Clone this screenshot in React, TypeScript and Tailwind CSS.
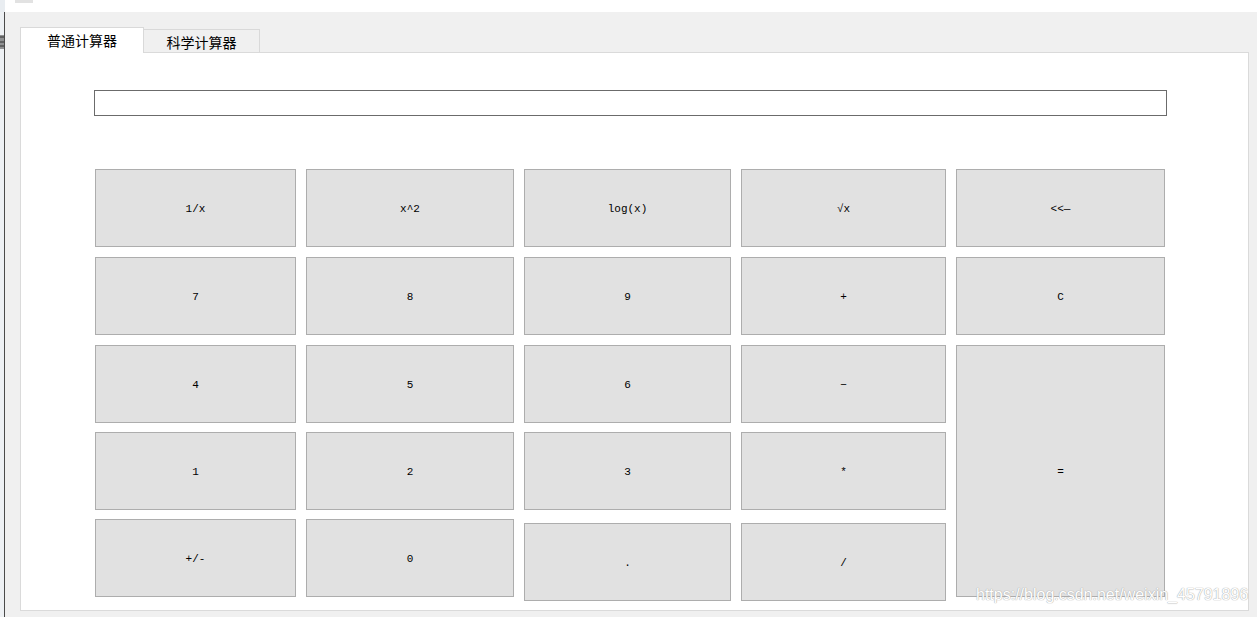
import React from "react";

const mono = { fontFamily: '"Liberation Mono", "DejaVu Sans Mono", monospace' };
const cjk = { fontFamily: '"Noto Sans CJK SC", "Noto Sans", sans-serif' };

type Key = { label: string; cls?: string };

const keys: Key[] = [
  { label: "1/x" },
  { label: "x^2" },
  { label: "log(x)" },
  { label: "√x" },
  { label: "<<—" },
  { label: "7" },
  { label: "8" },
  { label: "9" },
  { label: "+" },
  { label: "C" },
  { label: "4" },
  { label: "5" },
  { label: "6" },
  { label: "−" },
  { label: "=", cls: "row-span-3" },
  { label: "1" },
  { label: "2" },
  { label: "3" },
  { label: "*" },
  { label: "+/-" },
  { label: "0" },
  { label: ".", cls: "mt-[4px]" },
  { label: "/", cls: "mt-[4px]" },
];

const App = () => {
  return (
    <div className="w-[1257px] h-[617px] bg-white flex flex-col overflow-hidden">
      {/* strip of the window behind */}
      <div className="h-[12px] shrink-0 flex">
        <div className="w-[5px] bg-[#e9edf1]" />
        <div className="ml-[10px] w-[18px] h-[3px] bg-[#e2e2e2]" />
      </div>

      <div className="flex flex-1">
        <div className="w-[5px] shrink-0 bg-[#eef1f4] border-r border-[#4a4a4a] flex flex-col">
          <svg className="mt-[21px]" width="4" height="18" viewBox="0 0 4 18">
            <path d="M0 4H4M0 9H4M0 13H4M1 2V16M3 2V16" stroke="#333" strokeWidth="1" fill="none" />
          </svg>
        </div>

        <div className="flex-1 bg-[#f0f0f0] pl-[15px] pr-[8px] pt-[15px] pb-[6px] flex flex-col">
          {/* tabs */}
          <div className="flex items-end h-[25px] shrink-0 relative z-10">
            <div
              className="w-[124px] h-[26px] -mb-px bg-white border border-b-0 border-[#d9d9d9] flex items-center justify-center text-[14px] text-black"
              style={cjk}
            >
              普通计算器
            </div>
            <div
              className="w-[116px] h-[23px] bg-[#f0f0f0] border border-l-0 border-b-0 border-[#d9d9d9] flex items-center justify-center text-[14px] text-black pt-[2px]"
              style={cjk}
            >
              科学计算器
            </div>
          </div>

          {/* pane */}
          <div className="flex-1 bg-white border border-[#dadada] relative">
            <div className="ml-[73px] mt-[37px] w-[1073px] h-[26px] border border-[#6b6b6b] bg-white" />

            <div className="ml-[74px] mt-[53px] grid grid-cols-[201px_208px_207px_205px_209px] grid-rows-[78px_78px_77px_77px_78px] gap-x-[10px] gap-y-[10px]">
              {keys.map((k, i) => (
                <div
                  key={i}
                  className={`h-full min-h-[78px] bg-[#e1e1e1] border border-[#adadad] flex items-center justify-center pt-[3px] text-[11px] text-black ${k.cls ?? ""}`}
                  style={mono}
                >
                  {k.label}
                </div>
              ))}
            </div>

            <div
              className="absolute left-[955px] top-[532px] text-[16px] leading-[20px] text-white [text-shadow:0_0_1px_#a8a8a8,0_0_1px_#a8a8a8] whitespace-nowrap"
              style={{ fontFamily: '"Liberation Sans", Arial, sans-serif' }}
            >
              https://blog.csdn.net/weixin_45791896
            </div>
          </div>
        </div>
      </div>
    </div>
  );
};

export default App;
